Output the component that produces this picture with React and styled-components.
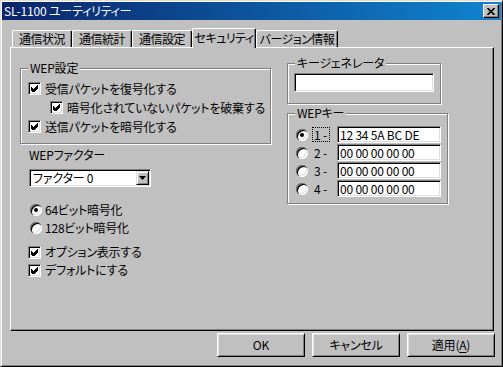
import styled, { createGlobalStyle } from 'styled-components'

const GlobalCSS = createGlobalStyle`
* {
  margin: 0;
  padding: 0;
  box-sizing: border-box;
}
body {
  background: #c0c0c0;
  font-family: "Noto Sans CJK JP", "Noto Sans", sans-serif;
  font-size: 12px;
  font-feature-settings: "palt";
  letter-spacing: -0.2px;
  color: #000;
  overflow: hidden;
}
`

const Window = styled.div`
  width: 503px;
  height: 367px;
  background: #c0c0c0;
  border-top: 1px solid #dfdfdf;
  border-left: 1px solid #dfdfdf;
  border-right: 1px solid #000;
  border-bottom: 1px solid #000;
  box-shadow: inset 1px 1px 0 #fff, inset -1px -1px 0 #808080;
  padding: 1px;
  display: flex;
  flex-direction: column;
`

const TitleBar = styled.div`
  height: 18px;
  background: linear-gradient(90deg, #0a246a, #1084d0);
  display: flex;
  align-items: center;
  justify-content: space-between;
  padding: 0 2px 0 2px;
`

const TitleText = styled.span`
  color: #fff;
  line-height: 16px;
`

const CloseButton = styled.div`
  width: 16px;
  height: 14px;
  background: #c0c0c0;
  border-top: 1px solid #fff;
  border-left: 1px solid #fff;
  border-right: 1px solid #000;
  border-bottom: 1px solid #000;
  box-shadow: inset -1px -1px 0 #808080;
  display: flex;
  align-items: center;
  justify-content: center;
`

const Body = styled.div`
  flex: 1;
  padding: 8px 7px 0 8px;
  display: flex;
  flex-direction: column;
`

const TabStrip = styled.div`
  height: 19px;
  display: flex;
  align-items: flex-end;
  padding-left: 2px;
`

const Tab = styled.div`
  position: relative;
  z-index: ${p => (p.$active ? 2 : 0)};
  width: ${p => p.$w}px;
  height: ${p => (p.$active ? 20 : 17)}px;
  margin-bottom: ${p => (p.$active ? -1 : 0)}px;
  background: #c0c0c0;
  border-top: 1px solid #fff;
  border-left: 1px solid #fff;
  border-right: 1px solid #000;
  border-radius: 2px 2px 0 0;
  box-shadow: inset -1px 0 0 #808080;
  display: flex;
  align-items: center;
  justify-content: center;
  line-height: 14px;
  white-space: nowrap;
  letter-spacing: -0.5px;
  padding-bottom: ${p => (p.$active ? 2 : 0)}px;
`

const Page = styled.div`
  height: 284px;
  border-top: 1px solid #fff;
  border-left: 1px solid #fff;
  border-right: 1px solid #000;
  border-bottom: 1px solid #000;
  box-shadow: inset -1px -1px 0 #808080;
  display: grid;
  grid-template-columns: 276px 1fr;
  align-items: start;
`

const LeftCol = styled.div`
  padding: 20px 0 0 9px;
  display: flex;
  flex-direction: column;
`

const RightCol = styled.div`
  padding-top: 15px;
  display: flex;
  flex-direction: column;
`

const GroupBox = styled.div`
  position: relative;
  width: ${p => p.$w}px;
  height: ${p => p.$h}px;
  margin-top: ${p => p.$mt || 0}px;
  border: 1px solid #808080;
  box-shadow: inset 1px 1px 0 #fff, 1px 1px 0 #fff;
  padding: ${p => p.$pad};
  display: flex;
  flex-direction: column;
`

const Legend = styled.span`
  position: absolute;
  top: -8px;
  left: 7px;
  padding: 0 2px;
  background: #c0c0c0;
  line-height: 14px;
`

const CheckRow = styled.div`
  height: ${p => p.$h || 19}px;
  margin-top: ${p => p.$mt || 0}px;
  display: flex;
  align-items: center;
  padding-left: ${p => p.$indent}px;
  line-height: 14px;
  white-space: nowrap;
`

const CheckBox = styled.span`
  width: 13px;
  height: 13px;
  flex: none;
  margin-right: 4px;
  background: #fff;
  border-top: 1px solid #808080;
  border-left: 1px solid #808080;
  border-right: 1px solid #fff;
  border-bottom: 1px solid #fff;
  box-shadow: inset 1px 1px 0 #000, inset -1px -1px 0 #dfdfdf;
  display: flex;
  align-items: center;
  justify-content: center;
`

const FieldLabel = styled.div`
  margin: 3px 0 0 9px;
  height: 16px;
  line-height: 16px;
`

const Select = styled.div`
  margin: 6px 0 0 9px;
  width: 122px;
  height: 18px;
  background: #fff;
  border-top: 1px solid #808080;
  border-left: 1px solid #808080;
  border-right: 1px solid #fff;
  border-bottom: 1px solid #fff;
  box-shadow: inset 1px 1px 0 #000, inset -1px -1px 0 #dfdfdf;
  padding: 1px;
  display: flex;
  align-items: center;
`

const SelectText = styled.span`
  flex: 1;
  padding-left: 2px;
  line-height: 14px;
`

const DropButton = styled.span`
  width: 13px;
  height: 14px;
  background: #c0c0c0;
  border-top: 1px solid #dfdfdf;
  border-left: 1px solid #dfdfdf;
  border-right: 1px solid #000;
  border-bottom: 1px solid #000;
  box-shadow: inset 1px 1px 0 #fff, inset -1px -1px 0 #808080;
  display: flex;
  align-items: center;
  justify-content: center;
`

const RadioRow = styled.div`
  height: ${p => p.$h || 18}px;
  margin-top: ${p => p.$mt || 0}px;
  padding-left: ${p => p.$indent || 0}px;
  display: flex;
  align-items: center;
  line-height: 14px;
`

const Radio = styled.span`
  position: relative;
  width: 12px;
  height: 12px;
  flex: none;
  margin-right: ${p => p.$gap}px;
  border-radius: 50%;
  background: #fff;
  box-shadow: inset 1px 1px 0 #808080, inset 2px 2px 0 #000, inset -1px -1px 0 #fff,
    inset -2px -2px 0 #dfdfdf;

  &::after {
    content: '';
    display: ${p => (p.$on ? 'block' : 'none')};
    position: absolute;
    left: 4px;
    top: 4px;
    width: 4px;
    height: 4px;
    border-radius: 50%;
    background: #000;
  }
`

const TextField = styled.div`
  width: ${p => p.$w}px;
  height: ${p => p.$h}px;
  margin: ${p => p.$m || 0};
  background: #fff;
  border-top: 1px solid #808080;
  border-left: 1px solid #808080;
  border-right: 1px solid #fff;
  border-bottom: 1px solid #fff;
  box-shadow: inset 1px 1px 0 #000, inset -1px -1px 0 #dfdfdf;
  padding-left: 2px;
  display: flex;
  align-items: center;
  line-height: 13px;
  white-space: nowrap;
`

const KeyRows = styled.div`
  display: flex;
  flex-direction: column;
  gap: 1px;
`

const KeyRow = styled.div`
  height: 17px;
  display: flex;
  align-items: center;
`

const KeyLabel = styled.span`
  width: 18px;
  height: 15px;
  margin-right: 7px;
  border: 1px dotted ${p => (p.$focus ? '#000' : 'transparent')};
  line-height: 13px;
  padding-left: 1px;
  white-space: nowrap;
`

const ButtonRow = styled.div`
  margin-top: 2px;
  margin-right: -1px;
  display: flex;
  justify-content: flex-end;
  gap: 7px;
`

const Button = styled.div`
  width: 88px;
  height: 24px;
  background: #c0c0c0;
  border-top: 1px solid #fff;
  border-left: 1px solid #fff;
  border-right: 1px solid #000;
  border-bottom: 1px solid #000;
  box-shadow: inset 1px 1px 0 #dfdfdf, inset -1px -1px 0 #808080;
  display: flex;
  align-items: center;
  justify-content: center;
  line-height: 14px;

  u {
    text-decoration: underline;
    text-underline-offset: 2px;
  }
`

const Check = () => (
  <svg width="7" height="7" viewBox="0 0 7 7" shapeRendering="crispEdges">
    <polygon points="0,2 2,4 6,0 7,0 7,3 2,8 0,5" fill="#000" />
  </svg>
)

const Arrow = () => (
  <svg width="7" height="4" viewBox="0 0 7 4">
    <polygon points="0,0 7,0 3.5,4" fill="#000" />
  </svg>
)

const CloseX = () => (
  <svg width="8" height="7" viewBox="0 0 8 7">
    <path d="M0.5 0 L7.5 7 M7.5 0 L0.5 7" stroke="#000" strokeWidth="1.6" />
  </svg>
)

const tabs = [
  { label: '通信状況', w: 60 },
  { label: '通信統計', w: 60 },
  { label: '通信設定', w: 60 },
  { label: 'セキュリティ', w: 64, active: true },
  { label: 'バージョン情報', w: 82 },
]

const keys = ['12 34 5A BC DE', '00 00 00 00 00', '00 00 00 00 00', '00 00 00 00 00']

function App() {
  return (
    <>
      <GlobalCSS />
      <Window>
        <TitleBar>
          <TitleText>SL-1100 ユーティリティー</TitleText>
          <CloseButton>
            <CloseX />
          </CloseButton>
        </TitleBar>
        <Body>
          <TabStrip>
            {tabs.map(t => (
              <Tab key={t.label} $w={t.w} $active={t.active}>
                {t.label}
              </Tab>
            ))}
          </TabStrip>
          <Page>
            <LeftCol>
              <GroupBox $w={251} $h={76} $pad="10px 0 0 7px">
                <Legend>WEP設定</Legend>
                <CheckRow $indent={0}>
                  <CheckBox><Check /></CheckBox>
                  受信パケットを復号化する
                </CheckRow>
                <CheckRow $indent={22}>
                  <CheckBox><Check /></CheckBox>
                  暗号化されていないパケットを破棄する
                </CheckRow>
                <CheckRow $indent={0}>
                  <CheckBox><Check /></CheckBox>
                  送信パケットを暗号化する
                </CheckRow>
              </GroupBox>
              <FieldLabel>WEPファクター</FieldLabel>
              <Select>
                <SelectText>ファクター 0</SelectText>
                <DropButton>
                  <Arrow />
                </DropButton>
              </Select>
              <RadioRow $mt={14} $indent={10}>
                <Radio $on $gap={3} />
                64ビット暗号化
              </RadioRow>
              <RadioRow $indent={10}>
                <Radio $gap={3} />
                128ビット暗号化
              </RadioRow>
              <CheckRow $indent={8} $h={18} $mt={6}>
                <CheckBox><Check /></CheckBox>
                オプション表示する
              </CheckRow>
              <CheckRow $indent={8} $h={18}>
                <CheckBox><Check /></CheckBox>
                デフォルトにする
              </CheckRow>
            </LeftCol>
            <RightCol>
              <GroupBox $w={154} $h={41} $pad="9px 0 0 6px">
                <Legend>キージェネレータ</Legend>
                <TextField $w={140} $h={19} />
              </GroupBox>
              <GroupBox $w={161} $h={91} $mt={9} $pad="12px 0 0 8px">
                <Legend>WEPキー</Legend>
                <KeyRows>
                  {keys.map((k, i) => (
                    <KeyRow key={i}>
                      <Radio $on={i === 0} $gap={4} />
                      <KeyLabel $focus={i === 0}>{i + 1} -</KeyLabel>
                      <TextField $w={104} $h={17}>{k}</TextField>
                    </KeyRow>
                  ))}
                </KeyRows>
              </GroupBox>
            </RightCol>
          </Page>
          <ButtonRow>
            <Button>OK</Button>
            <Button>キャンセル</Button>
            <Button>
              適用(<u>A</u>)
            </Button>
          </ButtonRow>
        </Body>
      </Window>
    </>
  )
}

export default App
